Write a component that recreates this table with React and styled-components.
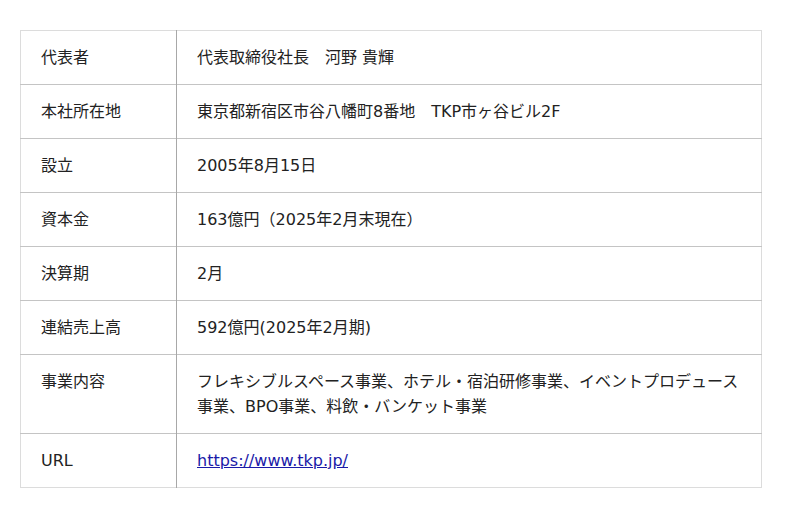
import React from 'react';
import styled, { createGlobalStyle } from 'styled-components';

const GlobalStyles = createGlobalStyle`
    body {
        margin: 0;
        background: #fff;
        font-family: "DejaVu Sans", "Noto Sans CJK JP", sans-serif;
        color: #222;
    }
`

const rows = [
    { label: '代表者', value: '代表取締役社長　河野 貴輝' },
    { label: '本社所在地', value: '東京都新宿区市谷八幡町8番地　TKP市ヶ谷ビル2F' },
    { label: '設立', value: '2005年8月15日' },
    { label: '資本金', value: '163億円（2025年2月末現在）' },
    { label: '決算期', value: '2月' },
    { label: '連結売上高', value: '592億円(2025年2月期)' },
    { label: '事業内容', value: 'フレキシブルスペース事業、ホテル・宿泊研修事業、イベントプロデュース事業、BPO事業、料飲・バンケット事業' },
    { label: 'URL', value: 'https://www.tkp.jp/', link: true },
];

const App = () => {
    return (
        <>
            <GlobalStyles />
            <Page>
                <Table>
                    <tbody>
                        {rows.map((row) => (
                            <Row key={row.label}>
                                <Label>{row.label}</Label>
                                <Value>
                                    {row.link
                                        ? <Link href={row.value}>{row.value}</Link>
                                        : row.value}
                                </Value>
                            </Row>
                        ))}
                    </tbody>
                </Table>
            </Page>
        </>
    );
};

const Page = styled.div`
    padding: 30px 0 0 20px;
`

const Table = styled.table`
    width: 742px;
    border-collapse: collapse;
    border: 1px solid #dcdcdc;
    font-size: 16px;
    line-height: 25px;
    table-layout: fixed;
`

const Row = styled.tr`
    border-bottom: 1px solid #c4c4c4;
    &:last-child {
        border-bottom: 1px solid #dcdcdc;
    }
`

const Label = styled.td`
    width: 115px;
    padding: 14px 20px;
    vertical-align: top;
    border-right: 1px solid #a8a8a8;
`

const Value = styled.td`
    padding: 14px 20px;
    vertical-align: top;
`

const Link = styled.a`
    color: #1a1aa8;
    text-decoration: underline;
`

export default App
